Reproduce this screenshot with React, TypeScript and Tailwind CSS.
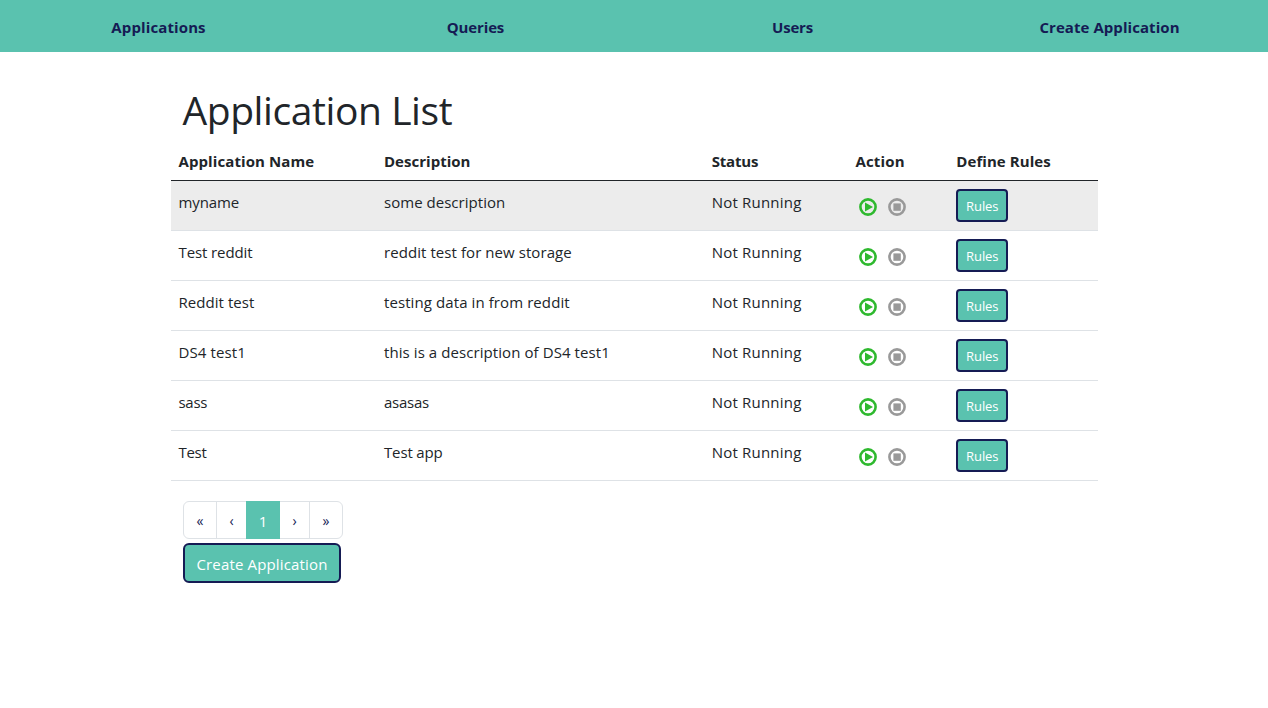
import React from "react";

const navItems = [
  { label: "Applications", cls: "tracking-[0.12px]" },
  { label: "Queries", cls: "tracking-[-0.15px]" },
  { label: "Users", cls: "tracking-[-0.2px]" },
  { label: "Create Application", cls: "tracking-[0.06px]" },
];

const applications = [
  { name: "myname", nameCls: "tracking-[-0.1px]", description: "some description", descCls: "tracking-[0.03px]" },
  { name: "Test reddit", nameCls: "tracking-[-0.1px]", description: "reddit test for new storage", descCls: "tracking-[0.07px]" },
  { name: "Reddit test", nameCls: "tracking-[0.05px]", description: "testing data in from reddit", descCls: "tracking-[0.09px]" },
  { name: "DS4 test1", nameCls: "tracking-[0.1px]", description: "this is a description of DS4 test1", descCls: "tracking-[0.08px]" },
  { name: "sass", nameCls: "tracking-[-0.3px]", description: "asasas", descCls: "tracking-[-0.25px]" },
  { name: "Test", nameCls: "tracking-[-0.3px]", description: "Test app", descCls: "tracking-[-0.15px]" },
];

function PlayIcon() {
  return (
    <svg width="18" height="18" viewBox="0 0 18 18" aria-hidden="true">
      <circle cx="9" cy="9" r="7.6" fill="none" stroke="#2eb92e" strokeWidth="2.6" />
      <path d="M6 4.4 14 9 6 13.6z" fill="#2eb92e" />
    </svg>
  );
}

function StopIcon() {
  return (
    <svg width="18" height="18" viewBox="0 0 18 18" aria-hidden="true">
      <circle cx="9" cy="9" r="7.6" fill="none" stroke="#999999" strokeWidth="2.6" />
      <rect x="5.4" y="5.4" width="7.4" height="7.4" fill="#999999" />
    </svg>
  );
}

const columns =
  "grid grid-cols-[205.5px_327.75px_143.75px_100.75px_1fr] px-[7.5px]";

export default function App() {
  return (
    <div className="min-h-[708px] bg-white font-['Open_Sans',sans-serif] text-[15px] leading-6 tracking-[-0.1px] text-[#212529]">
      <nav className="grid h-[52px] grid-cols-4 items-center bg-[#5ac2af] pt-px text-center font-bold text-[#151b54]">
        {navItems.map((item) => (
          <a key={item.label} className={item.cls}>
            {item.label}
          </a>
        ))}
      </nav>

      <main className="ml-[171px] w-[927px] pt-[34px]">
        <h1 className="h-[54px] pl-[11.5px] text-[39px] leading-[48px] tracking-[-0.42px]">Application List</h1>

        <div className={`${columns} h-[41px] border-b border-[#212529] pt-[9px] font-bold`}>
          <span className="tracking-[0.09px]">Application Name</span>
          <span className="tracking-[0.02px]">Description</span>
          <span className="tracking-[-0.2px]">Status</span>
          <span className="tracking-[0.15px]">Action</span>
          <span className="tracking-[0.08px]">Define Rules</span>
        </div>

        {applications.map((app, i) => (
          <div
            key={app.name}
            className={`${columns} h-[50px] border-b border-[#dee2e6] pt-2 ${i === 0 ? "bg-[#ececec]" : "bg-white"}`}
          >
            <span className={`pt-px ${app.nameCls}`}>{app.name}</span>
            <span className={`pt-px ${app.descCls}`}>{app.description}</span>
            <span className="pt-px tracking-[0.2px]">Not Running</span>
            <span className="flex gap-[11px] pt-[9px] pl-[3px]">
              <PlayIcon />
              <StopIcon />
            </span>
            <span>
              <button className="flex h-[33px] w-[52px] items-center justify-center rounded-[4px] border-2 border-[#151b54] bg-[#5ac2af] text-[13px] leading-5 text-white">
                Rules
              </button>
            </span>
          </div>
        ))}

        <div className="mt-5 ml-3 flex h-[38px] w-[160px] rounded-md border border-[#dee2e6] text-[#151b54]">
          <a className="flex w-[32px] items-center justify-center pt-0.5 text-sm">«</a>
          <a className="flex w-[30px] items-center justify-center border-l border-[#dee2e6] pt-0.5 text-sm">‹</a>
          <a className="-my-px flex w-[34px] items-center justify-center bg-[#5ac2af] pt-0.5 text-white">1</a>
          <a className="flex w-[29px] items-center justify-center pt-0.5 text-sm">›</a>
          <a className="flex w-[33px] items-center justify-center border-l border-[#dee2e6] pt-0.5 text-sm">»</a>
        </div>

        <button className="mt-1 ml-3 flex h-10 w-[158px] items-center justify-center rounded-md border-2 border-[#151b54] bg-[#5ac2af] pt-0.5 tracking-[0.16px] text-white">
          Create Application
        </button>
      </main>
    </div>
  );
}
